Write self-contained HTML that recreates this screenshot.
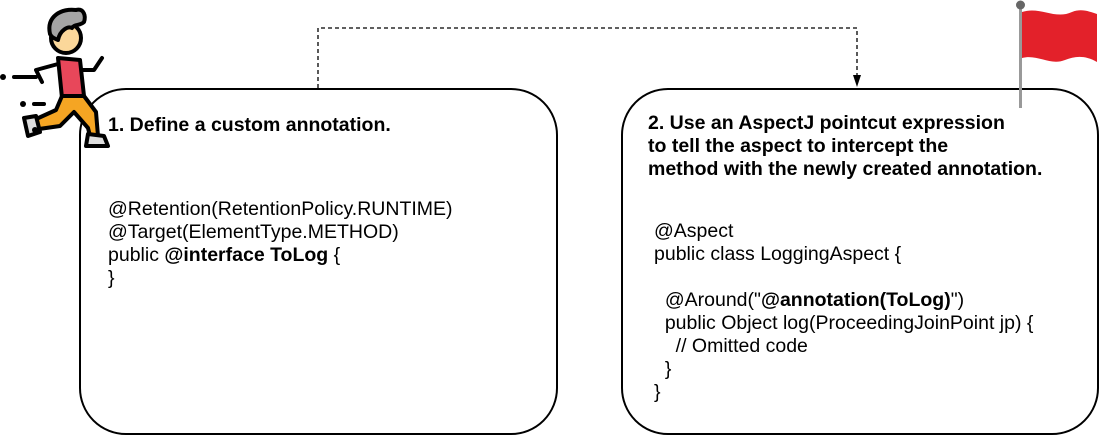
<!DOCTYPE html>
<html><head><meta charset="utf-8"><style>
html,body{margin:0;padding:0;background:#fff;width:1101px;height:437px;overflow:hidden;position:relative;font-family:"Liberation Sans",Arial,sans-serif;color:#000}
.t{position:absolute;font-size:19.5px;line-height:23px;white-space:pre}
b{font-weight:bold}
</style></head><body>
<svg width="1101" height="437" style="position:absolute;left:0;top:0">
  <rect x="80" y="89" width="477" height="345" rx="46" ry="46" fill="none" stroke="#000" stroke-width="2"/>
  <rect x="622" y="89" width="476" height="345" rx="46" ry="46" fill="none" stroke="#000" stroke-width="2"/>
  <path d="M318 88 V28 H857 V76" fill="none" stroke="#000" stroke-width="1.3" stroke-dasharray="4,3"/>
  <path d="M853 75 L861 75 L857 87 Z" fill="#000"/>
  <rect x="1019" y="8" width="3" height="100" fill="#999"/>
  <circle cx="1020.5" cy="5" r="4.5" fill="#666"/>
  <path d="M1022 12 C1040 6 1055 20 1072 12 C1082 8 1090 12 1097 14 L1097 62 C1085 55 1075 56 1065 60 C1050 66 1038 54 1022 58 Z" fill="#e3212a"/>
  <g stroke="#000" stroke-width="4" stroke-linejoin="round" stroke-linecap="round">
    <circle cx="66" cy="38" r="15" fill="#fbd79a"/>
    <path d="M50 34 C46 16 62 8 76 10 C84 8 86 16 84 22 C80 26 74 24 72 28 C68 26 60 30 58 40 C54 38 52 38 50 34 Z" fill="#a5a5a5"/>
    <path d="M58 58 L80 60 L84 96 L62 98 Z" fill="#e8475a"/>
    <path d="M58 64 L36 70 L42 82" fill="none"/>
    <path d="M82 70 L94 70 L102 58" fill="none"/>
    <path d="M62 96 L56 110 L34 120 L32 130 L60 126 L74 112 L88 128 L90 136 L98 136 L96 112 L84 96 Z" fill="#f5a523"/>
    <path d="M24 118 L36 116 L40 132 L28 136 Z" fill="#ddd"/>
    <path d="M88 134 L104 136 L108 146 L86 146 Z" fill="#ddd"/>
  </g>
  <g fill="#000">
    <circle cx="3" cy="77" r="3"/><rect x="12" y="75" width="26" height="4" rx="2"/>
    <circle cx="23" cy="104" r="3"/><rect x="32" y="102" width="14" height="4" rx="2"/>
    <circle cx="35" cy="130" r="3"/>
  </g>
</svg>
<div class="t" style="left:108px;top:114px"><b>1. Define a custom annotation.</b></div>
<div class="t" style="left:108px;top:198px">@Retention(RetentionPolicy.RUNTIME)
@Target(ElementType.METHOD)
public <b>@interface ToLog</b> {
}</div>
<div class="t" style="left:648px;top:112px"><b>2. Use an AspectJ pointcut expression
to tell the aspect to intercept the
method with the newly created annotation.</b></div>
<div class="t" style="left:654px;top:220px">@Aspect
public class LoggingAspect {

  @Around("<b>@annotation(ToLog)</b>")
  public Object log(ProceedingJoinPoint jp) {
    // Omitted code
  }
}</div>
</body></html>
